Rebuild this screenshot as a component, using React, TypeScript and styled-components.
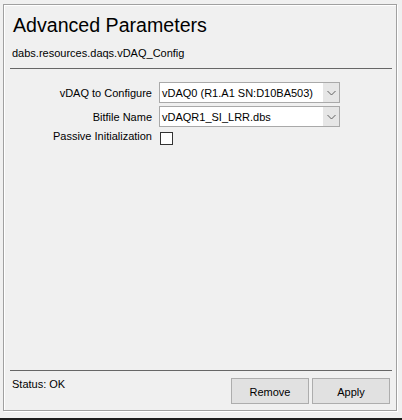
import React from "react";
import styled, { createGlobalStyle } from "styled-components";

const Global = createGlobalStyle`
  html, body { margin: 0; padding: 0; background: #f0f0f0; }
  body { font-family: "Liberation Sans", Arial, sans-serif; color: #000; }
`;

const Page = styled.div`
  box-sizing: border-box;
  width: 402px;
  height: 420px;
  padding: 4px 0 0 3px;
  background: #f0f0f0;
  border-bottom: 2px solid #1c1c1c;
  overflow: hidden;
`;

const Frame = styled.div`
  box-sizing: border-box;
  width: 394px;
  height: 407px;
  border: 1px solid #a0a0a0;
  box-shadow: 1px 1px 0 #ffffff, inset 1px 1px 0 #ffffff;
  display: flex;
  flex-direction: column;
  padding: 0 4px 0 6px;
`;

const Title = styled.h1`
  margin: 9px 0 0 3px;
  font-size: 19.6px;
  font-weight: normal;
  line-height: 23px;
`;

const Subtitle = styled.div`
  margin: 10px 0 0 2px;
  font-size: 11px;
  line-height: 13px;
`;

const Rule = styled.div`
  height: 1px;
  background: #666666;
`;

const HeaderRule = styled(Rule)`
  margin-top: 8px;
`;

const Form = styled.div`
  flex: 1;
  display: grid;
  grid-template-columns: 142px 181px;
  grid-template-rows: 21px 21px 17px;
  column-gap: 7px;
  row-gap: 3px;
  align-content: start;
  padding-top: 13px;
`;

const Label = styled.label<{ $top: number }>`
  justify-self: end;
  align-self: start;
  padding-top: ${(p) => p.$top}px;
  font-size: 11px;
  line-height: 13px;
  white-space: nowrap;
`;

const Combo = styled.div`
  box-sizing: border-box;
  height: 21px;
  border: 1px solid #a9a9a9;
  background: #ffffff;
  display: flex;
  align-items: stretch;
`;

const ComboValue = styled.div`
  flex: 1;
  padding: 4px 0 0 2px;
  font-size: 11px;
  line-height: 13px;
  white-space: nowrap;
  overflow: hidden;
`;

const ComboArrow = styled.div`
  width: 16px;
  background: #e6e6e6;
  display: flex;
  align-items: center;
  justify-content: center;
`;

const CheckBox = styled.div`
  box-sizing: border-box;
  width: 13px;
  height: 13px;
  margin-top: 2px;
  margin-left: 1px;
  border: 1px solid #333333;
  background: #ffffff;
`;

const Footer = styled.div`
  display: flex;
  justify-content: space-between;
  align-items: flex-start;
  padding: 7px 2px 6px 2px;
`;

const Status = styled.div`
  font-size: 11px;
  line-height: 13px;
`;

const Buttons = styled.div`
  display: flex;
  gap: 3px;
`;

const Button = styled.button`
  box-sizing: border-box;
  width: 78px;
  height: 26px;
  margin: 0;
  padding: 2px 0 0 0;
  border: 1px solid #adadad;
  background: #e1e1e1;
  font-family: "Liberation Sans", Arial, sans-serif;
  font-size: 11px;
  color: #000;
`;

const Chevron = () => (
  <svg width="9" height="6" viewBox="0 0 9 6">
    <polyline points="0.5,1 4.5,5 8.5,1" fill="none" stroke="#606060" strokeWidth="1" />
  </svg>
);

const Select = ({ value }: { value: string }) => (
  <Combo>
    <ComboValue>{value}</ComboValue>
    <ComboArrow>
      <Chevron />
    </ComboArrow>
  </Combo>
);

export default function App() {
  return (
    <>
      <Global />
      <Page>
        <Frame>
          <Title>Advanced Parameters</Title>
          <Subtitle>dabs.resources.daqs.vDAQ_Config</Subtitle>
          <HeaderRule />
          <Form>
            <Label $top={5}>vDAQ to Configure</Label>
            <Select value="vDAQ0 (R1.A1 SN:D10BA503)" />
            <Label $top={5}>Bitfile Name</Label>
            <Select value="vDAQR1_SI_LRR.dbs" />
            <Label $top={0}>Passive Initialization</Label>
            <CheckBox />
          </Form>
          <Rule />
          <Footer>
            <Status>Status: OK</Status>
            <Buttons>
              <Button>Remove</Button>
              <Button>Apply</Button>
            </Buttons>
          </Footer>
        </Frame>
      </Page>
    </>
  );
}
